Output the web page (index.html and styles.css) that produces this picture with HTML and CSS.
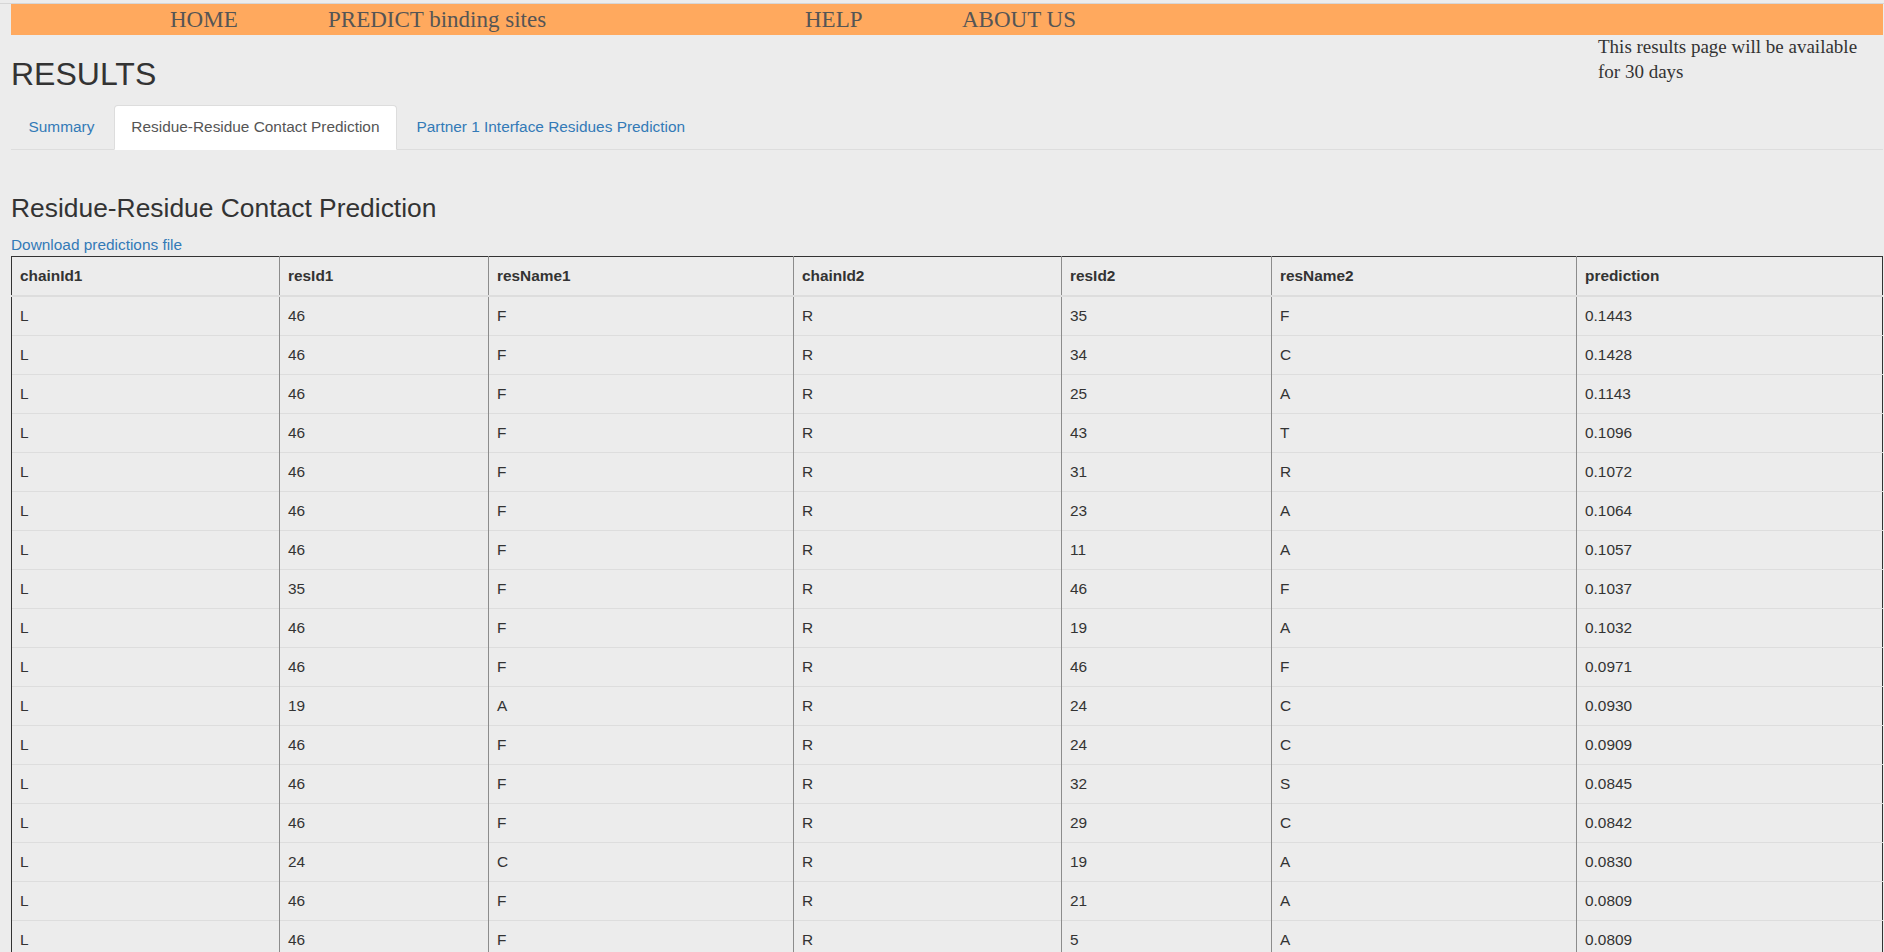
FILE: index.html
```html
<!DOCTYPE html>
<html>
<head>
<meta charset="utf-8">
<title>Results</title>
<link rel="stylesheet" href="styles.css">
</head>
<body>
<div class="topline"></div>
<div class="page">
  <nav class="navbar">
    <a class="nav-item w-home" href="#">HOME</a>
    <a class="nav-item w-predict" href="#">PREDICT binding sites</a>
    <a class="nav-item w-help" href="#">HELP</a>
    <a class="nav-item" href="#">ABOUT US</a>
  </nav>
  <div class="header-row">
    <h1 class="title">RESULTS</h1>
    <p class="note">This results page will be available for 30 days</p>
  </div>
  <ul class="tabs">
    <li class="tab"><a href="#">Summary</a></li>
    <li class="tab active"><a href="#">Residue-Residue Contact Prediction</a></li>
    <li class="tab"><a href="#">Partner 1 Interface Residues Prediction</a></li>
  </ul>
  <h3 class="section-title">Residue-Residue Contact Prediction</h3>
  <a class="download" href="#">Download predictions file</a>
  <table class="results">
    <thead>
      <tr><th>chainId1</th><th>resId1</th><th>resName1</th><th>chainId2</th><th>resId2</th><th>resName2</th><th>prediction</th></tr>
    </thead>
    <tbody>
      <tr><td>L</td><td>46</td><td>F</td><td>R</td><td>35</td><td>F</td><td>0.1443</td></tr>
      <tr><td>L</td><td>46</td><td>F</td><td>R</td><td>34</td><td>C</td><td>0.1428</td></tr>
      <tr><td>L</td><td>46</td><td>F</td><td>R</td><td>25</td><td>A</td><td>0.1143</td></tr>
      <tr><td>L</td><td>46</td><td>F</td><td>R</td><td>43</td><td>T</td><td>0.1096</td></tr>
      <tr><td>L</td><td>46</td><td>F</td><td>R</td><td>31</td><td>R</td><td>0.1072</td></tr>
      <tr><td>L</td><td>46</td><td>F</td><td>R</td><td>23</td><td>A</td><td>0.1064</td></tr>
      <tr><td>L</td><td>46</td><td>F</td><td>R</td><td>11</td><td>A</td><td>0.1057</td></tr>
      <tr><td>L</td><td>35</td><td>F</td><td>R</td><td>46</td><td>F</td><td>0.1037</td></tr>
      <tr><td>L</td><td>46</td><td>F</td><td>R</td><td>19</td><td>A</td><td>0.1032</td></tr>
      <tr><td>L</td><td>46</td><td>F</td><td>R</td><td>46</td><td>F</td><td>0.0971</td></tr>
      <tr><td>L</td><td>19</td><td>A</td><td>R</td><td>24</td><td>C</td><td>0.0930</td></tr>
      <tr><td>L</td><td>46</td><td>F</td><td>R</td><td>24</td><td>C</td><td>0.0909</td></tr>
      <tr><td>L</td><td>46</td><td>F</td><td>R</td><td>32</td><td>S</td><td>0.0845</td></tr>
      <tr><td>L</td><td>46</td><td>F</td><td>R</td><td>29</td><td>C</td><td>0.0842</td></tr>
      <tr><td>L</td><td>24</td><td>C</td><td>R</td><td>19</td><td>A</td><td>0.0830</td></tr>
      <tr><td>L</td><td>46</td><td>F</td><td>R</td><td>21</td><td>A</td><td>0.0809</td></tr>
      <tr><td>L</td><td>46</td><td>F</td><td>R</td><td>5</td><td>A</td><td>0.0809</td></tr>
    </tbody>
  </table>
</div>
</body>
</html>
```

FILE: styles.css
```css
html, body {
  margin: 0;
  padding: 0;
  background: #ececec;
}
body {
  font-family: "Liberation Sans", Arial, sans-serif;
  font-size: 15.4px;
  line-height: 22px;
  color: #333;
  padding-top: 3px;
}
.topline {
  height: 1px;
  background: #d6d6d6;
}
.page {
  padding: 0 1px 0 11px;
}
.navbar {
  display: flex;
  height: 31px;
  background: #ffa95e;
  padding-left: 159px;
  align-items: flex-start;
}
.nav-item {
  font-family: "Liberation Serif", "Times New Roman", serif;
  font-size: 23px;
  line-height: 31px;
  color: #555;
  text-decoration: none;
  white-space: nowrap;
}
.w-home { width: 158px; }
.w-predict { width: 477px; }
.w-help { width: 157px; }

.header-row {
  display: flex;
  justify-content: space-between;
  align-items: flex-start;
}
.title {
  margin: 22px 0 12.5px 0;
  font-size: 32px;
  line-height: 35.2px;
  font-weight: 500;
}
.note {
  margin: -1px 13px 0 0;
  width: 272px;
  font-family: "Liberation Serif", "Times New Roman", serif;
  font-size: 19px;
  line-height: 25px;
  color: #333;
}
.tabs {
  list-style: none;
  margin: 0;
  padding: 0;
  display: flex;
  border-bottom: 1px solid #ddd;
}
.tab {
  margin: 0 2px -1px 0;
}
.tab a {
  display: block;
  padding: 10px 16.5px 11px;
  border: 1px solid transparent;
  border-radius: 4px 4px 0 0;
  color: #337ab7;
  text-decoration: none;
}
.tab.active a {
  background: #fff;
  border-color: #ddd #ddd transparent;
  color: #555;
}
.section-title {
  margin: 44px 0 11px 0;
  font-size: 26.4px;
  line-height: 29px;
  font-weight: 500;
}
.download {
  display: block;
  color: #337ab7;
  text-decoration: none;
}
.results {
  width: 1872px;
  border-collapse: collapse;
  border: 1px solid #333;
  border-bottom: none;
}
.results th, .results td {
  text-align: left;
  padding: 8px 8px;
  line-height: 22px;
  border-left: 1px solid #8c8c8c;
  border-top: 1px solid #ddd;
  vertical-align: top;
}
.results th {
  border-top: none;
  border-bottom: 2px solid #ddd;
  font-weight: bold;
}
.results th:first-child, .results td:first-child { border-left: 1px solid #333; }
.results th:nth-child(1) { width: 251px; }
.results th:nth-child(2) { width: 192px; }
.results th:nth-child(3) { width: 288px; }
.results th:nth-child(4) { width: 251px; }
.results th:nth-child(5) { width: 193px; }
.results th:nth-child(6) { width: 288px; }
.results th:nth-child(7) { width: auto; }
```
